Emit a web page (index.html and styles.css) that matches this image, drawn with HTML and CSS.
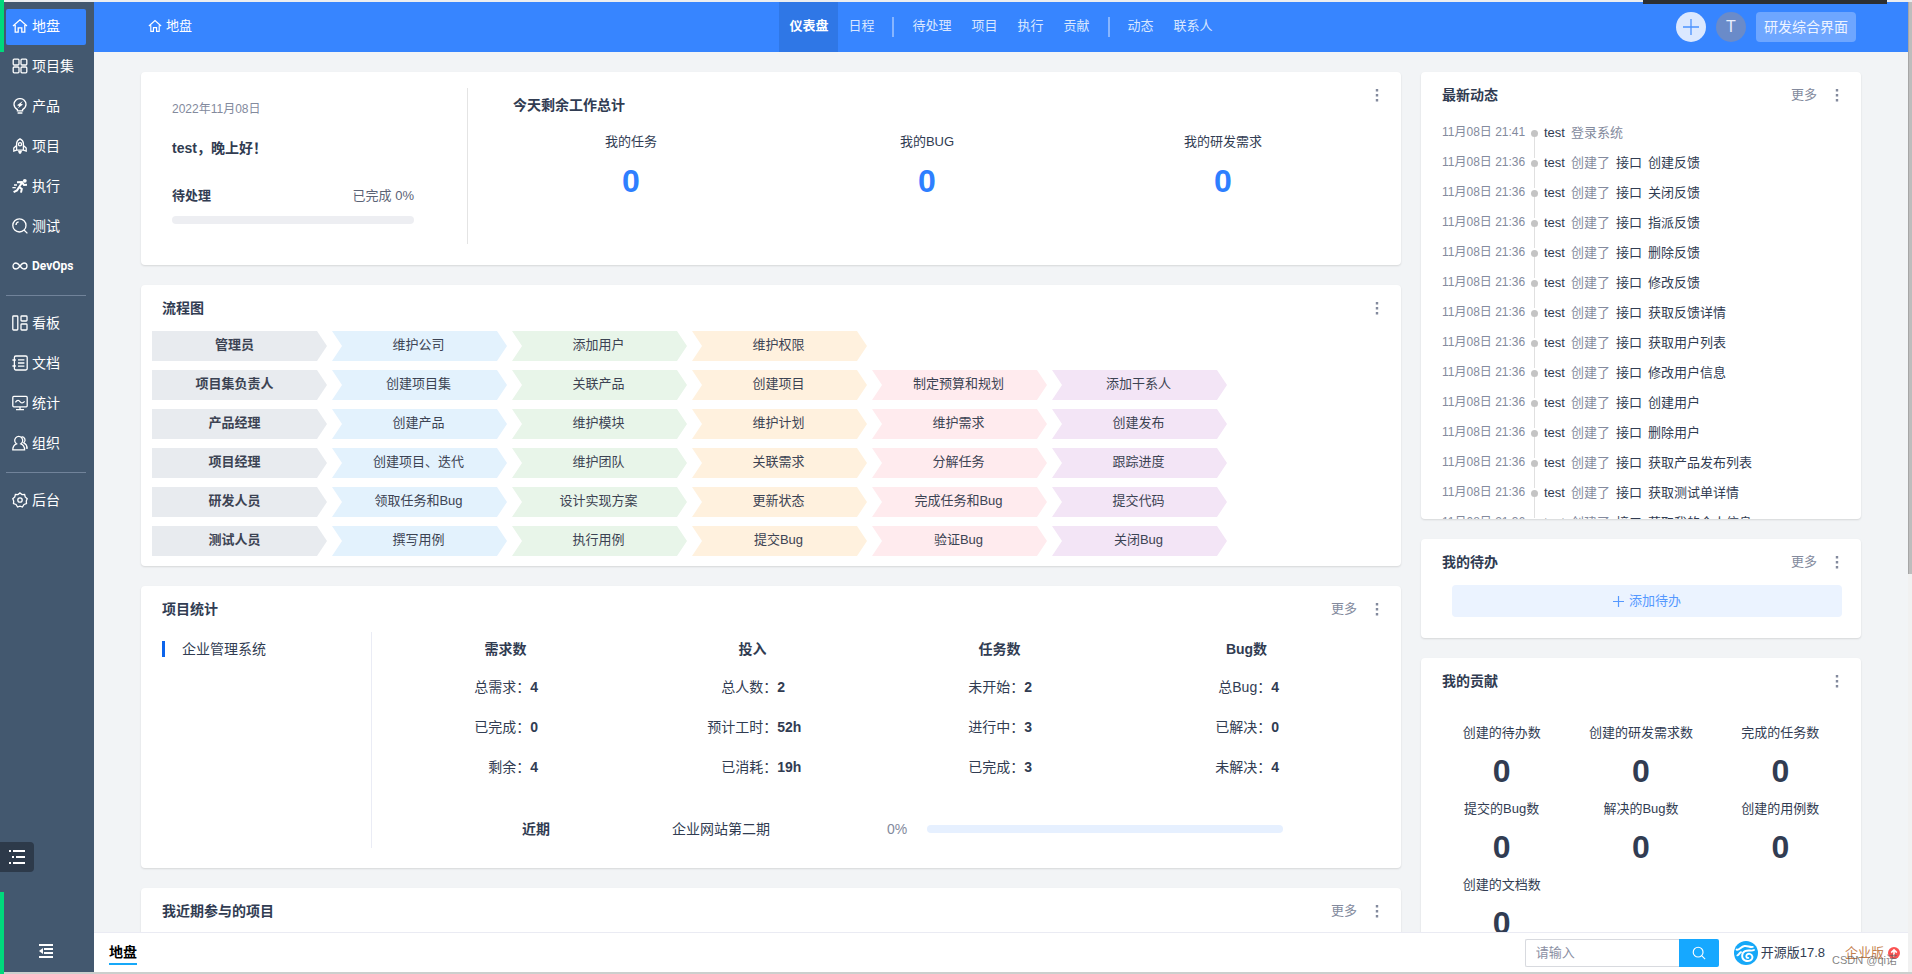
FILE: index.html
```html
<!DOCTYPE html>
<html lang="zh-CN">
<head>
<meta charset="utf-8">
<title>地盘</title>
<link rel="stylesheet" href="styles.css">
</head>
<body>
<svg class="defs" aria-hidden="true">
  <symbol id="home" viewBox="0 0 16 16"><path d="M1 8 8 1.8 15 8M3.2 7v7.2h3V9.8h3.6v4.4h3V7"/></symbol>
  <symbol id="kebab" viewBox="0 0 4 14"><path class="solid" d="M.8 1h2.4v2.4H.8zM.8 6h2.4v2.4H.8zM.8 11h2.4v2.4H.8z"/></symbol>
  <symbol id="search" viewBox="0 0 16 16"><circle cx="7" cy="7" r="5.6"/><path d="m11 11 4 4"/></symbol>
</svg>
<div class="topline"></div>
<div class="shell">
  <aside class="side">
    <nav class="menu">
      <a class="item on" href="#"><svg viewBox="0 0 16 16"><use href="#home"/></svg>地盘</a>
      <a class="item" href="#"><svg viewBox="0 0 16 16"><rect x="1.2" y="1.2" width="5.8" height="5.8" rx="1"/><rect x="9" y="1.2" width="5.8" height="5.8" rx="1"/><rect x="1.2" y="9" width="5.8" height="5.8" rx="1"/><rect x="9" y="9" width="5.8" height="5.8" rx="1"/></svg>项目集</a>
      <a class="item" href="#"><svg viewBox="0 0 16 16"><path d="M5.4 11.6C3.400 10.400 2 8.600 2 6.300a6 5.700 0 0 1 12 0c0 2.300-1.400 4.100-3.400 5.300v1.200H5.400zM5.600 15h4.800"/><path class="solid" d="M10.800 3 5 7.200l2.200.8L5.800 10.200 11 6.600l-2.100-.8z"/></svg>产品</a>
      <a class="item" href="#"><svg viewBox="0 0 16 16"><path d="M4.600 12.200V5.600C4.600 3.500 6 1.800 8 .8c2 1 3.400 2.700 3.400 4.800v6.600zM4.600 7.400 1.800 10v3l2.800-.9M11.400 7.400 14.200 10v3l-2.800-.9"/><circle cx="8" cy="6.200" r="1.600"/><path class="solid" d="M6 13h4l-.8 2.200L8 16l-1.200-.8z"/></svg>项目</a>
      <a class="item" href="#"><svg viewBox="0 0 16 16"><circle class="solid" cx="12.800" cy="2.800" r="1.900"/><path class="thick" d="M10 4.800 7.200 9l2.600 2-.8 3.600M6.800 9.600 5 12.400l-3.400 1.800M5 4.200l5-.2 2 3 3-.2"/><path d="M.4 9.600h3.400M2 7h3"/></svg>执行</a>
      <a class="item" href="#"><svg viewBox="0 0 16 16"><circle cx="7.400" cy="7.400" r="6.600"/><path d="m12 12 3.400 3.400M4 7a3.400 3.400 0 0 1 2.600-3.100"/></svg>测试</a>
      <a class="item" href="#"><svg viewBox="0 0 16 16"><path d="M8 8C6.500 6 5.500 5 4 5a3 3 0 0 0 0 6c1.500 0 2.500-1 4-3s2.500-3 4-3a3 3 0 0 1 0 6c-1.500 0-2.500-1-4-3z"/></svg><span class="narrow">DevOps</span></a>
      <hr>
      <a class="item" href="#"><svg viewBox="0 0 16 16"><rect x=".8" y="1" width="5" height="14" rx=".8"/><rect x="9" y="1" width="6" height="5" rx=".8"/><rect x="9" y="9" width="6" height="6" rx=".8"/></svg>看板</a>
      <a class="item" href="#"><svg viewBox="0 0 16 16"><rect x="2.400" y="1" width="12.800" height="14" rx="1.400"/><path d="M6 4.800h6.400M6 8h6.400M6 11.200h6.400M.4 5h3.400M.4 11h3.400"/></svg>文档</a>
      <a class="item" href="#"><svg viewBox="0 0 16 16"><rect x=".8" y="1.400" width="14.400" height="10.400" rx="1"/><path d="M3.400 7.400c2-3 3.600-2 4.800-.6s2.600 1.600 4.400-.4M4 14.600h8M8 12v2.400"/></svg>统计</a>
      <a class="item" href="#"><svg viewBox="0 0 16 16"><path d="M.8 14.800c0-3.400 1.600-5.200 3.700-6a4 4 0 1 1 4.400 0c2.100.8 3.700 2.600 3.700 6zM9.600 1.600a3.500 3.500 0 0 1 2.200 6.200c2 .9 3.200 2.600 3.400 5.400h-1.400"/></svg>组织</a>
      <hr>
      <a class="item" href="#"><svg viewBox="0 0 16 16"><path d="m8 .9 2 1.700 2.600-.2.600 2.600 2 1.700L14.300 9l.2 2.600-2.500.9L10.400 15 8 14.200 5.600 15 4 12.500l-2.500-.9L1.700 9 .8 6.700l2-1.700.6-2.600 2.600.2z"/><circle cx="8" cy="8" r="2.200"/></svg>后台</a>
    </nav>
    <button class="fold" aria-label="收起菜单"><svg viewBox="0 0 16 16"><path d="M1 2h14M6 6h9M6 10h9M1 14h14"/><path class="solid" d="M1 8l4-3v6z"/></svg></button>
    <button class="float" aria-label="列表"><svg viewBox="0 0 16 16"><path d="M0 2h2M4 2h12M3 8h2M7 8h9M0 14h2M4 14h12"/></svg></button>
  </aside>
  <div class="page">
    <header class="head">
      <a class="crumb" href="#"><svg viewBox="0 0 16 16"><use href="#home"/></svg>地盘</a>
      <nav class="tabs">
        <a class="cur" href="#">仪表盘</a><a href="#">日程</a><i></i><a href="#">待处理</a><a href="#">项目</a><a href="#">执行</a><a href="#">贡献</a><i></i><a href="#">动态</a><a href="#">联系人</a>
      </nav>
      <div class="tools">
        <button class="plus" aria-label="添加"><svg viewBox="0 0 18 18"><path d="M9 1v16M1 9h16"/></svg></button>
        <button class="user">T</button>
        <button class="mode">研发综合界面</button>
      </div>
    </header>
    <main class="board">
      <div class="col">
        <section class="card hello">
          <div class="greet">
            <p class="date">2022年11月08日</p>
            <h3>test，晚上好！</h3>
            <p class="todo"><b>待处理</b><span>已完成 0%</span></p>
            <div class="bar"></div>
          </div>
          <div class="today">
            <h3>今天剩余工作总计</h3>
            <div class="three">
              <div>我的任务<a href="#">0</a></div>
              <div>我的BUG<a href="#">0</a></div>
              <div>我的研发需求<a href="#">0</a></div>
            </div>
          </div>
          <button class="dots corner" aria-label="菜单"><svg><use href="#kebab"/></svg></button>
        </section>

        <section class="card flow">
          <div class="title"><h2>流程图</h2><button class="dots" aria-label="菜单"><svg><use href="#kebab"/></svg></button></div>
          <div class="steps">
            <div class="row"><b>管理员</b><span>维护公司</span><span>添加用户</span><span>维护权限</span></div>
            <div class="row"><b>项目集负责人</b><span>创建项目集</span><span>关联产品</span><span>创建项目</span><span>制定预算和规划</span><span>添加干系人</span></div>
            <div class="row"><b>产品经理</b><span>创建产品</span><span>维护模块</span><span>维护计划</span><span>维护需求</span><span>创建发布</span></div>
            <div class="row"><b>项目经理</b><span>创建项目、迭代</span><span>维护团队</span><span>关联需求</span><span>分解任务</span><span>跟踪进度</span></div>
            <div class="row"><b>研发人员</b><span>领取任务和Bug</span><span>设计实现方案</span><span>更新状态</span><span>完成任务和Bug</span><span>提交代码</span></div>
            <div class="row"><b>测试人员</b><span>撰写用例</span><span>执行用例</span><span>提交Bug</span><span>验证Bug</span><span>关闭Bug</span></div>
          </div>
        </section>

        <section class="card stat">
          <div class="title"><h2>项目统计</h2><a class="more" href="#">更多</a><button class="dots" aria-label="菜单"><svg><use href="#kebab"/></svg></button></div>
          <div class="split">
            <div class="names"><a href="#">企业管理系统</a></div>
            <div class="nums">
              <div class="four">
                <div class="grp"><h4>需求数</h4><span>总需求：</span><b>4</b><span>已完成：</span><b>0</b><span>剩余：</span><b>4</b></div>
                <div class="grp"><h4>投入</h4><span>总人数：</span><b>2</b><span>预计工时：</span><b>52h</b><span>已消耗：</span><b>19h</b></div>
                <div class="grp"><h4>任务数</h4><span>未开始：</span><b>2</b><span>进行中：</span><b>3</b><span>已完成：</span><b>3</b></div>
                <div class="grp"><h4>Bug数</h4><span>总Bug：</span><b>4</b><span>已解决：</span><b>0</b><span>未解决：</span><b>4</b></div>
              </div>
              <div class="recent"><b>近期</b><a href="#">企业网站第二期</a><span>0%</span><div class="bar blue"></div></div>
            </div>
          </div>
        </section>

        <section class="card last">
          <div class="title"><h2>我近期参与的项目</h2><a class="more" href="#">更多</a><button class="dots" aria-label="菜单"><svg><use href="#kebab"/></svg></button></div>
        </section>
      </div>

      <div class="col">
        <section class="card news">
          <div class="title"><h2>最新动态</h2><a class="more" href="#">更多</a><button class="dots" aria-label="菜单"><svg><use href="#kebab"/></svg></button></div>
          <ul class="feed">
            <li><time>11月08日 21:41</time><a href="#">test</a><em>登录系统</em></li>
            <li><time>11月08日 21:36</time><a href="#">test</a><em>创建了</em><span>接口</span><a href="#">创建反馈</a></li>
            <li><time>11月08日 21:36</time><a href="#">test</a><em>创建了</em><span>接口</span><a href="#">关闭反馈</a></li>
            <li><time>11月08日 21:36</time><a href="#">test</a><em>创建了</em><span>接口</span><a href="#">指派反馈</a></li>
            <li><time>11月08日 21:36</time><a href="#">test</a><em>创建了</em><span>接口</span><a href="#">删除反馈</a></li>
            <li><time>11月08日 21:36</time><a href="#">test</a><em>创建了</em><span>接口</span><a href="#">修改反馈</a></li>
            <li><time>11月08日 21:36</time><a href="#">test</a><em>创建了</em><span>接口</span><a href="#">获取反馈详情</a></li>
            <li><time>11月08日 21:36</time><a href="#">test</a><em>创建了</em><span>接口</span><a href="#">获取用户列表</a></li>
            <li><time>11月08日 21:36</time><a href="#">test</a><em>创建了</em><span>接口</span><a href="#">修改用户信息</a></li>
            <li><time>11月08日 21:36</time><a href="#">test</a><em>创建了</em><span>接口</span><a href="#">创建用户</a></li>
            <li><time>11月08日 21:36</time><a href="#">test</a><em>创建了</em><span>接口</span><a href="#">删除用户</a></li>
            <li><time>11月08日 21:36</time><a href="#">test</a><em>创建了</em><span>接口</span><a href="#">获取产品发布列表</a></li>
            <li><time>11月08日 21:36</time><a href="#">test</a><em>创建了</em><span>接口</span><a href="#">获取测试单详情</a></li>
            <li><time>11月08日 21:36</time><a href="#">test</a><em>创建了</em><span>接口</span><a href="#">获取我的个人信息</a></li>
          </ul>
        </section>

        <section class="card mytodo">
          <div class="title"><h2>我的待办</h2><a class="more" href="#">更多</a><button class="dots" aria-label="菜单"><svg><use href="#kebab"/></svg></button></div>
          <button class="add"><svg viewBox="0 0 12 12"><path d="M6 0v12M0 6h12"/></svg>添加待办</button>
        </section>

        <section class="card gifts">
          <div class="title"><h2>我的贡献</h2><button class="dots" aria-label="菜单"><svg><use href="#kebab"/></svg></button></div>
          <div class="grid">
            <div>创建的待办数<b>0</b></div>
            <div>创建的研发需求数<b>0</b></div>
            <div>完成的任务数<b>0</b></div>
            <div>提交的Bug数<b>0</b></div>
            <div>解决的Bug数<b>0</b></div>
            <div>创建的用例数<b>0</b></div>
            <div>创建的文档数<b>0</b></div>
          </div>
        </section>
      </div>
    </main>
    <footer class="foot">
      <a class="tab" href="#">地盘</a>
      <form class="find"><input type="text" placeholder="请输入" aria-label="搜索"><button type="button" aria-label="搜索"><svg viewBox="0 0 16 16"><use href="#search"/></svg></button></form>
      <a class="ver" href="#"><svg viewBox="0 0 24 24"><circle cx="12" cy="12" r="12" fill="#16a8f8"/><path d="M2.600 8.600C5.500 9.600 6.500 5.600 10.500 5c3.600-.5 5 1.600 8.300.9M20 9c-2.600 1.600-5.400-.6-9 1.200-3.800 2-3.800 7.600 0 9.300 3.800 1.600 8-.6 7.400-4-.6-3-4.400-3.600-5.800-1.400-.8 1.500.2 3 1.700 2.800M3.400 14.400c1.600-.4 1.800-2.400 3.600-3.200" fill="none" stroke="#fff" stroke-width="1.900" stroke-linecap="round"/></svg>开源版17.8</a>
      <a class="biz" href="#">企业版<svg viewBox="0 0 12 12"><circle cx="6" cy="6" r="6"/><path d="M6 9.500V3M3.200 5.600 6 2.800l2.800 2.800"/></svg></a>
      <span class="mark">CSDN @qi诺</span>
    </footer>
  </div>
  <div class="scroll"><div class="thumb"></div></div>
</div>
<div class="baseline"></div>
<div class="strip green-top"></div>
<div class="strip green-low"></div>
<div class="strip dark"></div>
</body>
</html>
```
FILE: styles.css
```css
* { box-sizing: border-box; }
body {
  margin: 0; height: 100vh; overflow: hidden; display: flex; flex-direction: column;
  background: #f2f4f6; color: #313c52;
  font: 13px/20px "Liberation Sans", "Noto Sans CJK SC", sans-serif;
}
h2, h3, h4, p, ul { margin: 0; padding: 0; font-size: 14px; }
a { color: inherit; text-decoration: none; }
em, i { font-style: normal; }
button { font: inherit; color: inherit; border: 0; padding: 0; background: none; display: flex; align-items: center; justify-content: center; }
svg { width: 16px; height: 16px; flex: none; fill: none; stroke: currentColor; stroke-width: 1.3; }
.solid { fill: currentColor; stroke: none; }
.thick { stroke-width: 2; }
.defs { position: absolute; width: 0; height: 0; }
.topline { flex: none; height: 2px; background: #eceef0; }
.baseline { flex: none; height: 2px; background: #cbcfcd; }
.shell { flex: 1; min-height: 0; display: flex; }

.side { position: relative; flex: none; width: 94px; background: #43586f; color: #fff; display: flex; flex-direction: column; justify-content: space-between; }
.menu { padding: 7px 8px 0 6px; font-size: 14px; display: flex; flex-direction: column; gap: 4px; }
.item { height: 36px; padding: 0 0 2px 6px; display: flex; align-items: center; gap: 4px; border-radius: 2px; white-space: nowrap; }
.item.on { background: #3785ff; }
.narrow { font-family: "Liberation Sans Narrow", Roboto, sans-serif; font-size: 12px; font-weight: bold; }
.menu hr { width: 100%; height: 1px; margin: 6px 0; border: 0; background: #71839a; }
.fold { width: 16px; height: 16px; margin: 0 0 13px 38px; }
.fold svg, .float svg { stroke-width: 2; }
.float { position: absolute; left: 0; bottom: 100px; width: 34px; height: 30px; background: #2d3a4a; border-radius: 0 4px 4px 0; }

.page { flex: 1; min-width: 0; display: flex; flex-direction: column; }
.head { flex: none; height: 50px; padding: 0 52px; background: #3785ff; color: #fff; display: grid; grid-template-columns: 1fr auto 1fr; align-items: center; }
.crumb { display: flex; align-items: center; gap: 4px; padding: 0 0 2px 2px; }
.crumb svg { width: 14px; height: 14px; }
.tabs { align-self: stretch; display: flex; align-items: center; color: #d9e7ff; }
.tabs a { height: 50px; padding: 0 10px; line-height: 48px; }
.tabs a.cur { background: #2f77e6; color: #fff; font-weight: bold; }
.tabs i { width: 2px; height: 20px; margin: 0 8px; background: #87b5ff; }
.tools { justify-self: end; display: flex; align-items: center; gap: 10px; }
.plus, .user { width: 30px; height: 30px; border-radius: 50%; }
.plus { background: #dbe8ff; color: #4b92ff; }
.plus svg { width: 18px; height: 18px; }
.user { background: #6a8bc9; color: #eaf0fd; font-size: 16px; }
.mode { height: 30px; padding: 0 8px; border-radius: 4px; background: #6ea6ff; color: #eef4ff; font-size: 14px; }

.board { flex: 1; min-height: 0; overflow: hidden; padding: 20px 47px 0; display: grid; grid-template-columns: minmax(0, 1fr) 440px; gap: 20px; align-items: start; }
.col { display: flex; flex-direction: column; gap: 20px; }
.card { position: relative; background: #fff; border-radius: 4px; box-shadow: 0 1px 2px rgba(0, 0, 0, .12); }
.title { height: 46px; padding: 0 20px 0 21px; display: flex; align-items: center; }
.title h2 { flex: 1; }
.more { margin-right: 16px; color: #838a9d; font-size: 13px; }
.dots { width: 8px; height: 20px; color: #838a9d; }
.dots svg { width: 4px; height: 14px; }
.corner { position: absolute; top: 13px; right: 20px; }

.hello { height: 193px; padding: 16px 0 21px; display: flex; }
.greet { flex: none; width: 327px; padding: 11px 53px 0 31px; border-right: 1px solid #e4e4e4; }
.date { font-size: 12px; color: #838a9d; }
.greet h3 { margin-top: 19px; }
.todo { margin-top: 28px; font-size: 13px; display: flex; justify-content: space-between; }
.todo span { color: #5b6376; }
.bar { height: 8px; margin-top: 10px; border-radius: 4px; background: #edeef2; }
.today { flex: 1; padding: 7px 30px 0 45px; }
.three { margin: 17px 0 0 -30px; display: grid; grid-template-columns: repeat(3, 1fr); text-align: center; }
.three a, .grid b { display: block; font-size: 32px; line-height: 40px; font-weight: bold; }
.three a { margin-top: 9px; color: #2e7fff; }

.steps { padding: 0 10px 10px 11px; display: flex; flex-direction: column; gap: 9px; color: #3c4353; }
.row { display: flex; gap: 5px; height: 30px; line-height: 28px; text-align: center; }
.row > * { width: 175px; padding-right: 2px; clip-path: polygon(0 0, calc(100% - 10px) 0, 100% 50%, calc(100% - 10px) 100%, 0 100%, 10px 50%); }
.row > b { padding-right: 10px; background: #e8ebef; clip-path: polygon(0 0, calc(100% - 10px) 0, 100% 50%, calc(100% - 10px) 100%, 0 100%); }
.row > :nth-child(2) { background: #e3f2fd; }
.row > :nth-child(3) { background: #e8f5e9; }
.row > :nth-child(4) { background: #fff1de; }
.row > :nth-child(5) { background: #ffebee; }
.row > :nth-child(6) { background: #f3e5f6; }

.stat { font-size: 14px; }
.split { height: 236px; padding-bottom: 20px; display: flex; }
.names { flex: none; width: 231px; padding: 9px 0 0 21px; border-right: 1px solid #eaecf5; }
.names a { display: block; height: 16px; padding-left: 17px; line-height: 16px; border-left: 3px solid #0c64eb; }
.nums { flex: 1; padding: 7px 31px 0 10px; }
.four { display: grid; grid-template-columns: repeat(4, 1fr); }
.grp { display: grid; grid-template-columns: 60% 40%; row-gap: 20px; }
.grp h4 { grid-column: 1 / 3; text-align: center; margin-bottom: -2px; }
.grp span { text-align: right; }
.recent { margin-top: 42px; padding: 0 87px 0 140px; display: flex; align-items: center; }
.recent a { margin-left: 122px; }
.recent span { width: 40px; margin-left: 117px; color: #838a9d; }
.bar.blue { flex: 1; margin: 0; background: #e6f0ff; }
.last { height: 200px; }

.news { height: 447px; overflow: hidden; }
.feed { list-style: none; font-size: 13px; padding: 0 21px; }
.feed li { position: relative; height: 30px; line-height: 29px; display: flex; gap: 6px; white-space: nowrap; }
.feed time { width: 96px; color: #838a9d; font-size: 12px; }
.feed em { color: #838a9d; }
.feed li::before { content: ""; position: absolute; left: 89px; top: 12px; width: 7px; height: 7px; border-radius: 50%; background: #c4c4c4; }
.feed li::after { content: ""; position: absolute; left: 92px; top: 19px; width: 1px; height: 21px; background: #e0e0e0; }
.mytodo { height: 99px; display: flex; flex-direction: column; }
.add { height: 32px; margin: 0 19px 0 31px; background: #ebf3ff; color: #5598ff; border-radius: 4px; gap: 5px; }
.add svg { width: 11px; height: 11px; }
.grid { padding: 19px 11px 20px; display: grid; grid-template-columns: repeat(3, 1fr); row-gap: 8px; text-align: center; }
.grid b { margin-top: 8px; }

.foot { position: relative; flex: none; height: 40px; padding: 0 8px 0 15px; background: #fff; border-top: 1px solid #eaebf3; display: flex; align-items: center; }
.tab { color: #000; font-size: 14px; font-weight: bold; line-height: 22px; border-bottom: 2px solid #16a8f8; margin-right: auto; }
.find { display: flex; width: 194px; height: 28px; margin-right: 15px; }
.find input { flex: 1; min-width: 0; border: 1px solid #d8dadf; border-right: 0; border-radius: 2px 0 0 2px; padding: 0 10px; font: inherit; outline: 0; }
.find input::placeholder { color: #8a8fa3; }
.find button { width: 40px; background: #16a8ff; color: #fff; border-radius: 0 2px 2px 0; }
.find svg { width: 14px; height: 14px; }
.ver { display: flex; align-items: center; gap: 3px; margin-right: 20px; }
.ver svg { width: 24px; height: 24px; stroke: none; }
.biz { display: flex; align-items: center; gap: 4px; color: #c4804e; }
.biz svg { width: 12px; height: 12px; fill: #fa5252; stroke: none; }
.biz path { stroke: #fff; stroke-width: 1.6; fill: none; }
.mark { position: absolute; right: 11px; bottom: 3px; font-size: 11px; line-height: 18px; color: rgba(90, 90, 90, .75); }

.scroll { flex: none; width: 4px; background: #f1f1f1; }
.thumb { height: 59%; background: #bdbdbd; border-left: 1px solid #a6a6a6; }
.strip { position: absolute; left: 0; width: 4px; background: #00d97c; }
.green-top { top: 0; height: 52px; }
.green-low { bottom: 0; height: 82px; }
.dark { left: auto; right: 25px; top: 0; width: 244px; height: 4px; background: #2c2f33; }
```
